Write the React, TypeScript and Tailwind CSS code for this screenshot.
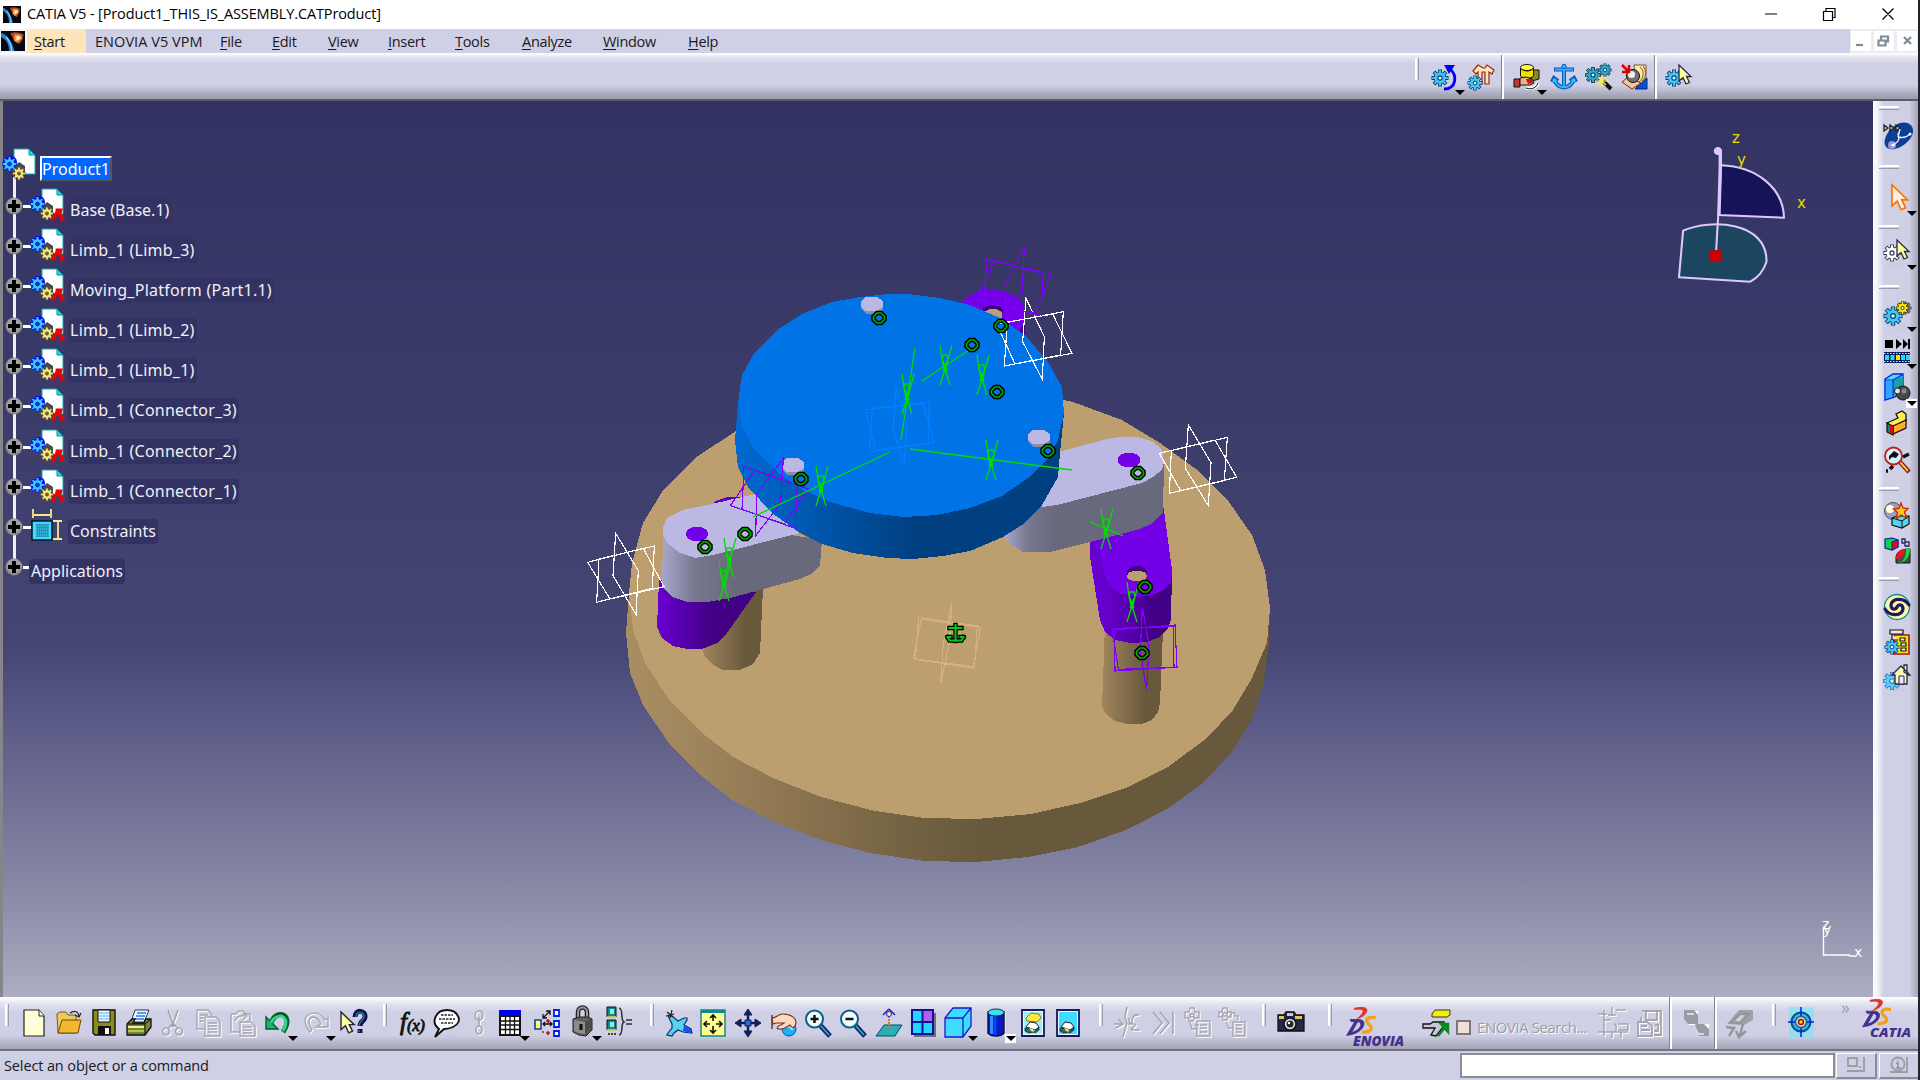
import React from "react";

type Kids = { children?: React.ReactNode };
type Pt = string;

/* ---------- icon primitives ---------- */

function Svg({ children, w = 26, h = 26, vb }: Kids & { w?: number; h?: number; vb?: string }) {
  return (
    <svg width={w} height={h} viewBox={vb ?? `0 0 ${w} ${h}`} className="block shrink-0 overflow-visible" fill="none">
      {children}
    </svg>
  );
}

function Gear({ x, y, r, fill = "#45c8ee", line = "#0b3a78", hole = "#e4f6ff" }: { x: number; y: number; r: number; fill?: string; line?: string; hole?: string }) {
  const teeth = "M0-1V1M-1 0H1M-.71-.71L.71 .71M.71-.71L-.71 .71";
  return (
    <g transform={`translate(${x} ${y}) scale(${r})`}>
      <path d={teeth} stroke={line} strokeWidth=".46" />
      <circle r=".72" fill={line} />
      <path d={teeth} stroke={fill} strokeWidth=".28" transform="scale(.92)" />
      <circle r=".64" fill={fill} />
      <circle r=".25" fill={hole} stroke={line} strokeWidth=".13" />
    </g>
  );
}

function Cursor({ x, y, s = 1, fill = "#ffff99", line = "#26264d" }: { x: number; y: number; s?: number; fill?: string; line?: string }) {
  return <path transform={`translate(${x} ${y}) scale(${s})`} d="M0 0V16L4 12.5L7 19L10.5 17.5L7.5 11.5H12Z" fill={fill} stroke={line} strokeWidth="1.3" />;
}

const Shadow = () => <path d="M6 25h18M9 27h12" stroke="#bcbccc" strokeWidth="1" strokeDasharray="1 1.5" />;

/* ---------- top toolbar icons ---------- */

const IcRotate = () => (
  <Svg><Shadow /><Gear x={8} y={14} r={8.5} /><path d="M12 25C24 25 26 12 18 5" stroke="#0000ff" strokeWidth="2.8" /><path d="M12 1h11l-6 9z" fill="#0000ff" /></Svg>
);
const IcShirt = () => (
  <Svg><Shadow /><path d="M10 1L5 7l3 3 2-2v12h4V8h3v12h4V8l3 2 2-4-7-5-2 3h-2z" fill="#ffe8b0" stroke="#a52020" strokeWidth="1.200" /><Gear x={7} y={19} r={7.5} /></Svg>
);
const IcTurn = () => (
  <Svg><Shadow /><path d="M16 6h9v9l-7 2z" fill="#8a8a20" stroke="#111" /><path d="M6.500 4v8c3 3 10 3 13 0V4c-3 4-10 4-13 0z" fill="#f0e000" stroke="#111" /><ellipse cx="13" cy="3.500" rx="6.500" ry="3" fill="#ffff40" stroke="#111" /><path d="M0 15h6v8H0z" fill="#c03838" stroke="#111" /><path d="M6 14l6-1 6 2 2 4-4 2H6z" fill="#f0b090" stroke="#111" /><path d="M12 15l6 0 1 4-5 1z" fill="#c01818" /><path d="M12 24c6 1 10 0 12-5" stroke="#fff" strokeWidth="3.500" /><path d="M12 24c6 2 10 0 12-5" stroke="#111" /></Svg>
);
const IcAnchor = () => (
  <Svg>
    <Shadow />
    <g stroke="#0a55b8" strokeWidth="4"><path d="M13 5v18M3 5.500h20M3 15c2 6 6 8 10 8.500 4-.5 8-2.500 10-8.500M1 18l2-4 4 3M25 18l-2-4-4 3" /></g>
    <g stroke="#35b8ff" strokeWidth="1.800"><path d="M13 5v18M4 5.500h18M3 15c2 6 6 8 10 8.500 4-.5 8-2.500 10-8.500M2 18l1-3 3 2M24 18l-1-3-3 2" /></g>
    <circle cx="13" cy="2.500" r="2.200" fill="#35b8ff" stroke="#0a55b8" />
  </Svg>
);
const IcGearsWand = () => (
  <Svg><Gear x={7} y={11} r={8} fill="#2ba8cc" line="#0c3050" /><Gear x={19} y={6} r={6.5} fill="#2ba8cc" line="#0c3050" /><path d="M16 16l9 9" stroke="#111" strokeWidth="4" /><path d="M16 11v12M10 17h12M12 13l8 8M20 13l-8 8" stroke="#fff04a" strokeWidth="1.200" /></Svg>
);
const IcCam = () => (
  <Svg><path d="M14 25l12-11v11z" fill="#0050d8" stroke="#002a80" /><path d="M13 1h12v13l-10 9z" fill="#ffe6a0" stroke="#604010" strokeWidth=".8" /><path d="M19 3c5 4 4 11-2 16M22 2c4 5 3 11-1 15" stroke="#7a5a20" /><path d="M1 18l6-5 13 6-9 6z" fill="#f2c4a0" stroke="#7a2a10" /><circle cx="12" cy="12" r="6.500" fill="#707070" stroke="#111" /><circle cx="10.500" cy="10.500" r="3.500" fill="#f0f0f0" /><path d="M1 1l6 6M1 8h7V1" stroke="#e00000" strokeWidth="2.500" /></Svg>
);
const IcGearCursor = ({ grey }: { grey?: boolean }) => (
  <Svg><Shadow />{grey ? <Gear x={8} y={14} r={8.5} fill="#fff" line="#303048" /> : <Gear x={8} y={14} r={8.5} />}<Cursor x={13} y={1} /></Svg>
);

/* ---------- right column icons ---------- */

const IcOrbit = () => (
  <Svg w={30} h={30}>
    <path d="M12 4C20-1 30 2 29 11S14 30 6 28 0 17 5 10c2-3 5-5 7-6z" fill="#0c3f94" />
    <circle cx="8" cy="24" r="4" fill="#9a94d8" />
    <path d="M14 12c2 8 0 9-5 12M14 16c4 1 8 1 12-3M14 16l2-8" stroke="#eef" strokeWidth="1.400" />
    <circle cx="26" cy="13" r="1.500" fill="#fff" /><circle cx="9" cy="24" r="1.600" fill="#fff" />
    <path d="M0 4l4 3-4 3zM6 4l4 3-4 3zM12 4l4 3-4 3z" fill="#d8c8a0" stroke="#222" strokeWidth="1.300" />
  </Svg>
);
const IcSelect = () => <Svg><Cursor x={8} y={0} s={1.3} fill="#fff0e4" line="#ff7300" /></Svg>;
const IcGears2 = () => <Svg><Shadow /><Gear x={21} y={7} r={6.500} fill="#808080" line="#444" /><Gear x={9} y={15} r={9.5} /><Gear x={18.5} y={7} r={6.5} fill="#ffe600" line="#222" hole="#fff" /></Svg>;
const IcFilm = () => (
  <Svg><path d="M1 2h8v8H1zM12 1l6 5-6 5zM19 1l5 5-5 5zM24 1h2v10h-2z" fill="#000" /><path d="M0 14h26v11H0z" fill="#0a1c60" /><path d="M1 17h4v5H1zM6.500 17h4v5h-4zM17 17h4v5h-4zM22 17h4v5h-4z" fill="#20e0f0" /><path d="M12 17h4v5h-4z" fill="#ffe600" /><path d="M0 15.500h26M0 23.500h26" stroke="#dfe6f5" strokeDasharray="1.500 1.500" /></Svg>
);
const IcBoxBall = () => (
  <Svg><path d="M1 5l8-5h10v14l-8 9-10 3z" transform="translate(0 -1)" fill="#50dcff" stroke="#0020e0" strokeWidth="1.400" /><path d="M9 5l10-4v14l-10 6z" fill="#17a0a8" /><path d="M1 5h8v18M9 5l9-5" stroke="#0020e0" strokeWidth="1.200" /><path d="M2 6h6v15l-6 3z" fill="#28a8ff" /><circle cx="19" cy="18" r="7" fill="#4a4a4a" stroke="#111" /><circle cx="13.500" cy="16" r="3" fill="#e4e4e4" stroke="#222" /><circle cx="20" cy="16" r="2.500" fill="#888" /></Svg>
);
const IcMeasure = () => (
  <Svg><Shadow /><path d="M3 13L14 8 12 4l6-3 4 3v7l-13 6z" fill="#ffee50" stroke="#111" strokeWidth="1.300" /><path d="M9 16l13-6v8l-13 6z" fill="#ffa020" stroke="#111" strokeWidth="1.200" /><path d="M11 18l10-5M11 21l10-5" stroke="#ffee50" strokeDasharray="1 1" /><path d="M3 13l6 3v9l-6-3z" fill="#138080" stroke="#111" strokeWidth="1.200" /><path d="M6 15l3 1v8l-3-1z" fill="#d01010" /></Svg>
);
const IcMagnify = () => (
  <Svg><path d="M16 15l9 10" stroke="#7a1010" strokeWidth="4.500" /><path d="M16 15l8 9" stroke="#ffc040" strokeWidth="2" /><circle cx="9.500" cy="9" r="8.500" fill="#d8f0ff" stroke="#c02020" strokeWidth="1.800" /><path d="M5 9l5-5 5 3-3 4-4-1-3 3z" fill="#111" /><path d="M19 10l6-3M2 24l2 0M6 22l3-3" stroke="#111" strokeWidth="3.500" /></Svg>
);
const IcClash = () => (
  <Svg><circle cx="9" cy="9" r="8.500" fill="#9a9cc0" stroke="#555" /><circle cx="6" cy="7" r="4" fill="#ffffe0" /><path d="M8 16l5-2h12v8l-7 4-10-3z" fill="#50d8f0" stroke="#111" strokeWidth="1.200" /><path d="M8 16l10 3v7M18 19l7-5" stroke="#111" /><path d="M17 1l2 5 5 .5-3.500 3.500 2 6-5.500-3-4.500 3.500 1-6-4-3.500 5.500-.5z" fill="#ffc820" stroke="#d02010" strokeWidth="1.300" /></Svg>
);
const IcCubes = () => (
  <Svg><path d="M1 2l7-1 6 2v7l-6 3-7-2z" fill="#00d840" stroke="#1a1aa0" strokeWidth="1.200" /><path d="M8 5l6-2v7l-6 3z" fill="#f00020" stroke="#1a1aa0" /><path d="M18 2h3v4h-3zM21 5h4v4h-4z" stroke="#26265a" strokeWidth="1.300" /><path d="M12 26v-6c1-6 6-8 14-8v14z" fill="#4a4a4a" stroke="#111" /><path d="M12 20c2-6 6-8 9-8-1 6-4 9-9 10z" fill="#ff1020" /><path d="M12 26c8 0 10-6 10-14l4 0c0 7-4 13-11 14z" fill="#10e030" /></Svg>
);
const IcSwirl = () => (
  <Svg>
    <circle cx="13" cy="13" r="12.500" fill="#fff6a0" stroke="#0b8a98" strokeWidth="1.300" />
    <g stroke="#1a1a60" strokeWidth="3.200" strokeLinecap="round">
      <path d="M25 11C20 3 8 4 7 11c0 4 4 6 6 2" />
      <path d="M1 15c5 8 17 7 18 0 0-4-4-6-6-2" />
    </g>
  </Svg>
);
const IcTreeGear = () => (
  <Svg><path d="M10 6h15v19H10z" fill="#ffe600" stroke="#a01818" strokeWidth="1.600" /><path d="M6 1h13v4H6zM8 5v6h6M16 9h5v3h-5zM17 14h5v3h-5zM17 19h5v3h-5z" fill="#e8e8f0" stroke="#111" strokeWidth="1.200" /><Gear x={8} y={18} r={7.5} fill="#45c4f4" /></Svg>
);
const IcHome = () => (
  <Svg><Shadow /><Gear x={8} y={17} r={9} fill="#45d8f8" line="#5a6ab0" /><path d="M20 8V1h3v9zM8 11L17 2l9 9h-3v9H11v-9z" fill="#fff6b0" stroke="#26264d" strokeWidth="1.300" /><path d="M15 12h5v8h-5z" fill="#e8e8ff" stroke="#26264d" /></Svg>
);

/* ---------- bottom toolbar icons ---------- */

const IcNew = () => <Svg><Shadow /><path d="M3 0h15l5 6v20H3z" fill="#ffffcf" stroke="#222" strokeWidth="1.200" /><path d="M18 0v6h5" fill="#fff" stroke="#222" /><path d="M6 13l5-5 3 5 6-3M6 20l7-3" stroke="#fff" strokeWidth="2" /></Svg>;
const IcOpen = () => <Svg><Shadow /><path d="M1 4l3-2h6l2 3h8v18H2z" fill="#e8cc60" stroke="#7a5a00" /><path d="M2 23L6 10h19l-3 13z" fill="#f2b830" stroke="#6a4a00" /><path d="M14 3c4-3 8-2 9 3M25 3l-2 4-4-2" stroke="#222" strokeWidth="1.200" /></Svg>;
const IcSave = () => <Svg><Shadow /><path d="M2 0h22v25H4l-2-2z" fill="#8c8c18" stroke="#111" strokeWidth="1.400" /><path d="M7 0h12v12H7z" fill="#e8f4ff" stroke="#111" /><path d="M8 3h10M8 6h10M8 9h10" stroke="#60b0f0" /><path d="M7 16h13v9H7z" fill="#111" /><path d="M14 18h4v6h-4z" fill="#fff" /></Svg>;
const IcPrint = () => <Svg><Shadow /><path d="M9 0h14l-5 12H5z" fill="#eef6ff" stroke="#203060" /><path d="M11 3h9M10 6h9M8 9h10" stroke="#2080e0" strokeWidth="1.500" /><path d="M1 14l5-5h3l-2 4h11l2-4h5v8l-6 8H1z" fill="#7c8430" stroke="#111" strokeWidth="1.300" /><path d="M1 14h18l6-5M19 14v11" stroke="#111" /><path d="M2 16h16v2H2z" fill="#f0f0a0" /><path d="M2 20h16v2H2z" fill="#b8c060" /><path d="M15 20h3" stroke="#00ff00" /></Svg>;

const Emboss = ({ d, w = 2 }: { d: string; w?: number }) => (
  <Svg><path d={d} stroke="#fff" strokeWidth={w} transform="translate(1 1)" /><path d={d} stroke="#a5a5ac" strokeWidth={w} /></Svg>
);
const IcCut = () => <Emboss w={1.6} d="M8 0l6 17M18 0l-6 17M6 18a3.500 3.500 0 1 0 .1 0M19 18a3.500 3.500 0 1 0 .1 0M12 14l-4 5M14 14l4 5" />;
const IcCopy = () => <Emboss w={1.3} d="M1 0h11l4 4v3M1 0v19h7M4 5h8M4 8h4M4 11h4M9 7h11l4 4v15H9zM12 13h9M12 16h9M12 19h9M12 22h9" />;
const IcPaste = () => <Emboss w={1.4} d="M1 4h5l3-3h4l3 3h4v7M1 4v18h9M5 11c2-5 5-6 10-5M13 3l4 3-4 4M10 12h11l4 4v10H10zM13 17h9M13 20h9M13 23h9" />;
const IcUndo = () => <Svg><Shadow /><path d="M6 13C10 2 21 2 22 11c0 5-2 8-4 11" stroke="#045a2e" strokeWidth="5" /><path d="M1 7v12h12z" fill="#18b868" stroke="#045a2e" strokeWidth="1.400" /><path d="M6 13C10 4 20 4 21 12c0 4-1 6-3 9" stroke="#30d888" strokeWidth="3" /></Svg>;
const IcRedo = () => <Emboss w={1.4} d="M22 10C16 0 5 2 2 9c0 5 1 8 5 13l2-3C6 16 4 8 10 7c4 0 6 3 8 7l-5 3h12V8z" />;
const IcHelp = () => <Svg><Shadow /><path d="M14 7c0-8 11-7 10 0 0 4-5 4-5 9M19 19v4" stroke="#10104a" strokeWidth="5" /><path d="M15 7c0-6 8-6 8 0 0 3-5 4-5 9M18 20v2" stroke="#1e7a90" strokeWidth="1.500" /><Cursor x={0} y={2} s={1.1} /></Svg>;
const IcFx = () => (
  <Svg><Shadow /><text x="1" y="20" fontSize="25" fontStyle="italic" fill="#111" stroke="#111" strokeWidth=".9" fontFamily="Liberation Serif, serif">f</text><text x="8" y="21" fontSize="17" fontStyle="italic" fill="#111" stroke="#111" strokeWidth=".8" textLength="18" fontFamily="Liberation Serif, serif">(x)</text></Svg>
);
const IcBubble = () => <Svg><Shadow /><path d="M1 27l4-8C-4 12 2 0 13 0s17 12 6 17c-4 2-7 2-9 2z" fill="#fff" stroke="#111" strokeWidth="1.900" /><path d="M7 5h12M5 9h16M7 13h12" stroke="#222" strokeWidth="1.600" strokeDasharray="2.500 1" /></Svg>;
const IcChain = () => <Emboss w={1.6} d="M13 1c5 0 5 9 0 9s-5-9 0-9M13 7v10M13 16c4 0 4 8 0 8s-4-8 0-8" />;
const IcTable = () => <Svg><path d="M2 0h22v26H2z" fill="#111" /><path d="M2 0h22v6H2z" fill="#0000e8" /><path d="M4 7h18v17H4z" fill="#fff" /><path d="M8.500 7v17M13 7v17M17.500 7v17M4 11h18M4 15h18M4 19.500h18" stroke="#111" strokeWidth="1.300" /></Svg>;
const IcRelate = () => <Svg><path d="M1 10h6v9H1z" fill="#ffff60" stroke="#1040a0" strokeWidth="1.600" /><path d="M9 8l7-7M12 1h4v4M9 4v4h4M9 14h9M11 12l-2 2 2 2M16 12l2 2-2 2" stroke="#111" strokeWidth="1.300" /><path d="M14 9v4M12 11h4M14 21v4M12 23h4M8 22h2" stroke="#c01010" strokeWidth="1.500" /><path d="M20 0h5v6h-5zM20 11h5v6h-5zM20 21h5v5h-5z" fill="#fff" stroke="#0020e0" strokeWidth="1.800" /></Svg>;
const IcLock = () => <Svg><Shadow /><path d="M9 9V2c0-6 9-6 9 0v7" stroke="#222" strokeWidth="4.500" /><path d="M9 9V2c0-6 9-6 9 0v7" stroke="#999" strokeWidth="2" /><path d="M4 9l6-2h9l4 2v11l-6 6-7-1-6-3z" fill="#606060" stroke="#222" /><path d="M5 10l11 2v12l-6-1-5-2z" fill="#8c8c8c" /><path d="M16 12l6-3v10l-6 6z" fill="#4c4c4c" /><path d="M12 14v6" stroke="#111" strokeWidth="3" /></Svg>;
const IcEquiv = () => <Svg><path d="M1-3h9v10H1zM1 10h9v10H1z" fill="#138a8a" stroke="#111" /><path d="M4-1h4v5H4zM4 12h4v5H4z" fill="#8ae8f0" /><path d="M1 7h9M1 20h9" stroke="#ffe640" strokeWidth="1.500" /><path d="M2 24h8" stroke="#111" strokeWidth="1.500" strokeDasharray="2 1" /><path d="M13-2c5 1 1 12 5 14-4 2 0 12-5 13M20 10h6M20 14h6" stroke="#333" strokeWidth="1.500" /></Svg>;

const IcPlane = () => <Svg><Shadow /><path d="M2 6l4 0 6 5 6-3 3 0 0 2-3 5 7 4 1 4-9-1-5-2-4 3-2 3-5-1 1-2 4-5 0-4z" fill="#58d4ea" stroke="#12306a" strokeWidth="1.200" /><path d="M18 16l8 4-2 3-7-2z" fill="#1848ff" /><path d="M1 2l6 5M6 0L4 8M0 6l8-2" stroke="#222" strokeWidth="1.200" /></Svg>;
const IcFit = () => <Svg><path d="M1 0h24v26H1z" fill="#ffff90" stroke="#138a8a" strokeWidth="1.500" /><path d="M1 0h24v3H1z" fill="#138a8a" /><path d="M13 11V5M13 16v7M10 14H4M16 14h6M10 8l3-3 3 3M10 20l3 3 3-3M7 11l-3 3 3 3M19 11l3 3-3 3" stroke="#111" strokeWidth="1.600" /></Svg>;
const IcPan = () => <Svg><Shadow /><path d="M13 2v22M2 13h22" stroke="#10205a" strokeWidth="2.500" /><path d="M13-1l4 6H9zM13 27l4-6H9zM0 13l6-4v8zM26 13l-6-4v8z" fill="#10205a" stroke="#10205a" /><path d="M10 10h6v6h-6z" fill="#2a6ad0" stroke="#10205a" /></Svg>;
const IcHand = () => <Svg><Shadow /><circle cx="18" cy="19" r="7" fill="#20b0f0" stroke="#0a50c0" /><path d="M15 17c3-2 6 0 6 3" stroke="#bff0ff" strokeWidth="2" /><path d="M1 8c4 0 6-4 11-4 8 0 13 4 13 9-1 5-4 6-6 2-4 2-6 5-11 4-3 0-2-3 2-4l3-2H5l-3 1z" fill="#ffd8c0" stroke="#7a3020" strokeWidth="1.200" /><path d="M1 5v14" stroke="#7a3020" strokeWidth="1.500" /></Svg>;
const IcZoom = ({ plus }: { plus?: boolean }) => <Svg><Shadow /><path d="M15 15l10 11" stroke="#10206a" strokeWidth="5" /><path d="M15 15l9 10" stroke="#30a8d8" strokeWidth="1.800" /><circle cx="9.500" cy="9" r="8.500" fill="#f2fbff" stroke="#0b6088" strokeWidth="2" /><path d={plus ? "M5.500 9h8M9.500 5v8" : "M5.500 9h8"} stroke="#111" strokeWidth="2.500" /></Svg>;
const IcNormal = () => <Svg><Shadow /><path d="M0 26L8 15h18l-7 11z" fill="#28b0b8" stroke="#0a4a60" /><path d="M13 20V3" stroke="#e07000" strokeWidth="1.800" strokeDasharray="2 1" /><path d="M13-1l-6 6M13-1l6 6" stroke="#2020c0" strokeWidth="1.500" /><circle cx="13" cy="4" r="2.500" fill="#ffe8a0" stroke="#2020c0" /></Svg>;
const IcMulti = () => <Svg><path d="M4 3h22v24H4z" fill="#707078" /><path d="M2 0h21v24H2z" fill="#20d8ff" stroke="#10109a" strokeWidth="2" /><path d="M13 1h9v10h-9z" fill="#b060f0" /><path d="M12.500 0v24M2 12h21" stroke="#10109a" strokeWidth="2" /></Svg>;
const IcCube = () => <Svg><path d="M0 8L8-2h18v18l-8 11H0zM0 8h18v19M18 8l8-10" fill="#40dcff" stroke="#1818d0" strokeWidth="1.300" /></Svg>;
const IcCyl = () => <Svg><path d="M5 2h18v24H5z" fill="#f4f0a0" /><path d="M5 2v21c3 4 13 4 16 0V2z" fill="#0a1ac0" stroke="#0a0a50" strokeWidth="1.400" /><path d="M8.500 6v18" stroke="#2a90ff" strokeWidth="3" /><path d="M12 6v19" stroke="#1040ff" strokeWidth="3" /><ellipse cx="13" cy="2.500" rx="8" ry="3.500" fill="#40dcf0" stroke="#0a3060" /></Svg>;
const IcHide = ({ swap }: { swap?: boolean }) => (
  <Svg>
    <Shadow />
    <path d="M2 0h22v26H2z" fill={swap ? "#9ceefa" : "#40dcff"} stroke="#18185a" strokeWidth="1.800" />
    <path d="M3.500 1.500h19v23h-19z" stroke="#e8fcff" />
    {swap && <path d="M6 8l5-5 8 1 2 4-4 4-10-1z" fill="#ffe640" stroke="#8a7a20" />}
    <path d="M6 17l4-5 6 1 3 4-4 3z" fill="#fff" stroke="#222" /><path d="M5 18l5 0 4 4-5 1-4-2zM14 22l5-5 0 3-4 3z" fill="#1a6a90" stroke="#222" strokeWidth=".8" /><path d="M9 18l4 1 1 3-3-1z" fill="#ffe640" />
  </Svg>
);

const IcG1 = () => <Emboss w={1.6} d="M0 14h9M2 18l7-4-5-5M13-3l-2 10 2 6-4 14M14 14h6M17 20h9M15 8c0 4 0 6 5 6M25 5c-6-1-7 3-7 8M17 20l5-6" />;
const IcG2 = () => <Emboss w={1.6} d="M2 2l9 11-9 11M9 2l9 11-9 11M22 2v22" />;
const IcG3 = () => <Emboss w={1.4} d="M1 2h4l1-4h4l1 4h4v6h-4l-2 3H5L4 8H1zM6 4h4v3H6zM6 12l2 7h5M13 11h13v15H13zM16 15h7M16 18h7M16 22h7M11 15h4" />;
const IcG4 = () => <Emboss w={1.4} d="M0 2h3l1-4h4l1 4h3v5H9L8 10H4L3 7H0zM4 3h4v3H4zM12 3h4v3h3v4M7 12l3 6h4M14 12h12v14H14zM17 15h6M17 19h6M17 22h6" />;
const IcCamera = () => <Svg><Shadow /><path d="M0 5h6l2-3h8l2 3h8v16H0z" fill="#26264a" stroke="#111" strokeWidth="1.300" /><path d="M1 6h5v3H1zM17 6h7v3h-7z" fill="#d8c860" /><path d="M9 3h6v3H9z" fill="#c8c8d8" /><circle cx="12" cy="14" r="6" fill="#ddd" stroke="#111" strokeWidth="1.500" /><circle cx="12" cy="14" r="3.500" fill="#223" /><circle cx="11" cy="13" r="1.200" fill="#fff" /></Svg>;
const IcSearch = () => <Svg><Shadow /><path d="M9 4l3-4h15v5l-3 2H9z" fill="#f0f000" stroke="#333" /><path d="M0 14h7l3-2h11v4l-8 10-5-1 4-7H0z" fill="#c8c8d4" stroke="#111" strokeWidth="1.300" /><path d="M15 26l9-11M18 14h7v8z" fill="#0a8a20" stroke="#0a8a20" strokeWidth="2.500" /></Svg>;
const IcG5 = () => <Emboss w={1.5} d="M-2 4h9M4 0v26M-2 22h30M4 10h7M12-3v9M8 5h8M16 0h10M14 14c3 0 3 8 0 8M18 14h10v6H18M21 22v6M12 22v6" />;
const IcG6 = () => <Emboss w={1.8} d="M5 1h19v24h-7M9 1v9h11V1M1 12h9l5 4v10H1zM4 7v5M4 16h6M4 20h9M18 15h3v6h-4" />;
const IcG7 = () => <Svg><path d="M1 0h13v14H5L1 9zM13 13h12v12H15z" fill="#fff" transform="translate(1 1)" /><path d="M1 0h10l4 5v9H5L1 9zM12 14h9l5 5v7H16z" fill="#9a9aa2" /><path d="M4 4h7M12 19l4 5 5 0" stroke="#d8d8e4" strokeWidth="2" /></Svg>;
const IcG8 = () => <Svg><path d="M1 14L13 0h14v10l-9 5z" fill="#a0a0a8" /><path d="M6 12L14 4h8l-8 9zM0 17l8 1-5 8M17 14l-3 11M10 21l3 6 7-6" fill="#d0d0e0" stroke="#94949c" strokeWidth="2.400" /></Svg>;
const IcTarget = () => <Svg><path d="M2-3h25v30H2z" fill="#70e6fa" opacity=".6" /><circle cx="14" cy="12" r="9.500" fill="#30b8e0" stroke="#0a4a90" strokeWidth="2" /><circle cx="14" cy="12" r="5.500" fill="#ffe890" stroke="#1a60a0" strokeWidth="1.500" /><path d="M14-3v9M14 18v9M1 12h7M20 12h7" stroke="#0020e0" strokeWidth="1.500" /><circle cx="14" cy="12" r="2.500" fill="#ffd850" stroke="#901010" strokeWidth="1.500" /></Svg>;

function DSLogo({ name, w }: { name: string; w: number }) {
  const big = w === 64;
  return (
    <Svg w={w} h={40} vb={`0 0 ${w} 40`}>
      <g transform={big ? "scale(1.02 1.02)" : ""}>
        <path d="M5 13.200H13C23.500 13 19 27.500 1.500 28.800L3 26.500 9.500 15.500L12.500 15.300L6.500 26C16 23.500 18.500 15.500 11.500 15.200H6Z" fill="#432f8c" stroke="#432f8c" strokeWidth=".8" />
        <path d="M9 2.200C15 .8 22 .8 21.500 4.500C21 8.500 16 11.500 11.500 12.500C15 10 18.500 6.500 17.500 4.500C16.500 3 12.500 3 9 3.500Z" fill="#e0332c" stroke="#e0332c" strokeWidth=".7" />
        <path d="M30 11.500C20.500 10 19 14.200 23.500 18.200C28 22.200 25.500 25.500 16.500 25.800" stroke="#f3a01e" strokeWidth="3.200" />
      </g>
      <text x={big ? 8 : 9} y={big ? 39.500 : 38.500} fontSize={big ? 14 : 12} fontStyle="italic" fontWeight="800" fill="#432f8c" textLength={big ? 51 : 41} lengthAdjust="spacingAndGlyphs" fontFamily="Open Sans, sans-serif">{name}</text>
    </Svg>
  );
}

/* ---------- toolbar pieces ---------- */

const Arrow = ({ lit }: { lit?: boolean }) => (
  <span className={`absolute -right-[7px] -bottom-[7px] flex h-[9px] w-[11px] items-center justify-center ${lit ? "bg-white" : ""}`}>
    <svg width="10" height="5" viewBox="0 0 10 5"><path d="M0 0h10L5 5z" fill="#000" /></svg>
  </span>
);

function Slot({ gap, arrow, lit, children }: Kids & { gap: string; arrow?: boolean; lit?: boolean }) {
  return (
    <div className={`relative h-[26px] w-[26px] shrink-0 ${gap}`}>
      {children}
      {arrow && <Arrow lit={lit} />}
    </div>
  );
}
const Grip = ({ gap }: { gap: string }) => <div className={`mt-[-16px] h-[22px] w-1 shrink-0 border-r border-l-2 border-r-[#9c9cac] border-l-white ${gap}`} />;
const Sep = ({ gap }: { gap: string }) => <div className={`h-full w-[3px] shrink-0 border-l border-r-2 border-l-[#84848e] border-r-white ${gap}`} />;

/* ---------- app logo ---------- */

const AppIcon = ({ w, h }: { w: number; h: number }) => (
  <svg width={w} height={h} viewBox="0 0 18 17" preserveAspectRatio="none" className="block shrink-0">
    <path d="M0 0h18v17H0z" fill="#050814" />
    <path d="M7 2c4-2 8 0 10 1l-1 4-2 4-4-2z" fill="#b4481c" /><path d="M10 3l4 0 2 3-4 4-2-2z" fill="#f09840" /><path d="M12 4l3 1-2 3-2-1z" fill="#fff0c0" />
    <path d="M0 2c3 0 8 5 10 15H6C6 11 4 7 0 5z" fill="#2b7fd4" /><path d="M4 5c2 3 4 7 4 12" stroke="#8fd4ff" fill="none" />
  </svg>
);

/* ---------- 3D scene ---------- */

const Quads = ({ q, c }: { q: Pt[]; c: string }) => (
  <g stroke={c} strokeWidth="3.500" fill="none">{q.map((p) => <polygon key={p} points={p} />)}</g>
);

const rings = [[879, 318], [1001, 326], [972, 345], [997, 392], [1048, 451], [801, 479], [745, 534], [705, 547], [1138, 473], [1145, 587], [1142, 653]];
const knots = [[945, 365], [982, 375], [907, 394], [991, 460], [821, 486], [729, 558], [724, 581], [1106, 529], [1132, 602]];
const pins = [[872, 304], [1039, 437], [793, 465]];

function Scene() {
  return (
    <svg className="absolute inset-0" width="1870" height="896" viewBox="3 101 1870 896" fill="none">
      <defs>
        <linearGradient id="baseSide" gradientUnits="userSpaceOnUse" x1="626" x2="1270" y1="0" y2="0">
          <stop offset="0" stopColor="#a98e62" /><stop offset=".1" stopColor="#a0865d" /><stop offset=".3" stopColor="#87704d" /><stop offset=".42" stopColor="#756444" /><stop offset=".55" stopColor="#68593d" />
        </linearGradient>
        <linearGradient id="blueSide" gradientUnits="userSpaceOnUse" x1="735" x2="1064" y1="0" y2="0">
          <stop offset="0" stopColor="#006ad4" /><stop offset=".25" stopColor="#0056ac" /><stop offset=".55" stopColor="#003f80" />
        </linearGradient>
        <linearGradient id="greyL" gradientUnits="userSpaceOnUse" x1="662" x2="735" y1="0" y2="0">
          <stop offset="0" stopColor="#a9a8cd" /><stop offset=".45" stopColor="#77778f" /><stop offset="1" stopColor="#69697d" />
        </linearGradient>
        <linearGradient id="greyR" gradientUnits="userSpaceOnUse" x1="1003" x2="1055" y1="0" y2="0">
          <stop offset="0" stopColor="#a9a8cd" /><stop offset=".5" stopColor="#77778f" /><stop offset="1" stopColor="#69697d" />
        </linearGradient>
        <linearGradient id="purL" gradientUnits="userSpaceOnUse" x1="657" x2="710" y1="0" y2="0">
          <stop offset="0" stopColor="#6a00d4" /><stop offset="1" stopColor="#420084" />
        </linearGradient>
        <linearGradient id="purR" gradientUnits="userSpaceOnUse" x1="1090" x2="1155" y1="0" y2="0">
          <stop offset="0" stopColor="#6a00d4" /><stop offset=".3" stopColor="#6400c8" /><stop offset="1" stopColor="#420084" />
        </linearGradient>
        <linearGradient id="postL" gradientUnits="userSpaceOnUse" x1="702" x2="745" y1="0" y2="0">
          <stop offset="0" stopColor="#a0865d" /><stop offset="1" stopColor="#68593d" />
        </linearGradient>
        <linearGradient id="postR" gradientUnits="userSpaceOnUse" x1="1102" x2="1145" y1="0" y2="0">
          <stop offset="0" stopColor="#a0865d" /><stop offset="1" stopColor="#68593d" />
        </linearGradient>
      </defs>

      <g shapeRendering="crispEdges">
        {/* base plate */}
        <polygon fill="url(#baseSide)" points="629,593 626,633 630,673 643,705 670,745 698,773 732,800 775,822 821,840 870,853 924,861 976,862 1028,857 1078,847 1126,830 1167,809 1203,783 1231,753 1252,720 1263,687 1269,643 1270,608" />
        <polygon fill="#bd9f6f" points="800,395 736,431 695,458 662,492 643,523 632,563 629,593 633,630 645,663 670,701 701,732 733,757 773,778 821,797 875,811 924,818 977,819 1031,814 1080,803 1126,788 1168,767 1207,738 1233,710 1252,678 1267,643 1270,608 1265,570 1252,535 1229,502 1200,472 1160,443 1122,420 1073,402 1063,400 1000,380 900,375" />

        {/* posts */}
        <polygon fill="url(#postL)" points="702,640 702,648 705,657 713,665 723,670 740,670 753,664 760,653 763,588 735,590" />
        <polygon fill="url(#postR)" points="1105,625 1102,707 1107,715 1115,721 1127,724 1142,724 1152,720 1158,712 1160,703 1163,630" />

        {/* left arm */}
        <polygon fill="url(#purL)" points="659,580 657,627 662,638 673,646 687,649 702,649 717,643 727,633 756,592" />
        <polygon fill="#6000c4" points="713,503 718,500 728,497 740,497 740,505" />
        <polygon fill="url(#greyL)" points="663,535 662,587 672,597 687,602 707,602 730,598 800,579 813,573 820,565 822,540 760,530" />
        <polygon fill="#bbb9e3" points="663,527 667,518 683,510 712,504 755,494 830,533 800,533 713,555 695,558 680,553 667,543 663,535" />
        <ellipse cx="697" cy="534" rx="11" ry="7.500" fill="#7300e6" />

        {/* right arm */}
        <polygon fill="url(#purR)" points="1090,535 1090,557 1100,620 1105,632 1115,640 1130,643 1147,642 1160,637 1168,628 1171,620 1172,570 1120,530" />
        <polygon fill="#7300e6" points="1161,495 1164,510 1167,533 1172,570 1171,582 1163,590 1153,595 1137,597 1120,593 1110,586 1104,573 1097,536" />
        <ellipse cx="1137" cy="573" rx="10.500" ry="7" fill="#420084" />
        <ellipse cx="1137" cy="576" rx="10" ry="5.500" fill="#bd9f6f" />
        <polygon fill="url(#greyR)" points="1164,462 1163,512 1153,523 1140,529 1090,542 1050,552 1023,552 1010,544 1003,537 1040,495" />
        <polygon fill="#bbb9e3" points="1050,454 1062,451 1107,439 1120,437 1137,437 1152,441 1162,449 1164,462 1162,470 1153,477 1142,483 1057,505 1035,508" />
        <ellipse cx="1129" cy="460" rx="11.500" ry="7.500" fill="#7300e6" />

        {/* rear link */}
        <polygon fill="#7300e6" points="961,303 967,297 980,290 993,289 1010,293 1022,302 1025,315 1025,337 990,330" />
        <polygon fill="#420084" points="1018,332 1025,322 1025,337" />
        <ellipse cx="993" cy="311" rx="10.500" ry="6" fill="#420084" />
        <ellipse cx="993" cy="315" rx="9.500" ry="6" fill="#bd9f6f" />

        {/* moving platform */}
        <polygon fill="url(#blueSide)" points="738,403 735,440 738,467 748,487 772,513 800,533 822,544 853,553 887,558 913,559 943,556 970,551 1003,537 1025,523 1042,505 1058,477 1060,453 1064,413" />
        <polygon fill="#0073e6" points="860,297 887,294 908,294 940,298 970,305 1000,318 1025,335 1048,362 1062,387 1064,413 1058,440 1047,460 1028,478 1002,496 970,508 937,515 903,517 870,513 833,503 803,490 777,472 753,447 742,427 738,403 742,375 755,352 777,330 802,314 832,302" />
        {pins.map(([x, y]) => (
          <g key={x}>
            <path d={`M${x - 11} ${y}v5l6 5h9l7-4v-6z`} fill="#8d8cac" />
            <path d={`M${x - 6} ${y - 7}h11l6 4v6l-6 4h-11l-5-4v-6z`} fill="#bbb9e3" />
          </g>
        ))}
      </g>

      {/* reference planes */}
      <g transform="translate(580 240) scale(.33333)" shapeRendering="crispEdges">
        <Quads c="#ffffff" q={["1338,175 1393,290 1387,418 1328,305", "1282,247 1450,215 1442,345 1273,378", "1250,252 1418,222 1476,340 1305,372"]} />
        <Quads c="#ffffff" q={["107,880 175,992 168,1123 99,1007", "57,957 223,918 217,1045 50,1087", "23,967 190,925 252,1040 90,1077"]} />
        <Quads c="#0080ff" q={["947,440 980,555 973,682 940,570", "877,505 1048,486 1045,612 868,635", "856,510 1028,490 1064,608 888,630"]} />
        <Quads c="#8000ff" q={["610,655 602,790 527,887 530,762", "492,680 652,735 645,865 486,808", "525,690 685,747 613,852 451,797"]} />
        <Quads c="#8000ff" q={["1333,20 1327,155 1279,245 1277,135", "1220,57 1390,98 1383,225 1213,185", "1243,63 1413,105 1360,222 1190,180"]} />
        <Quads c="#d3b27c" q={["1116,1088 1108,1210 1082,1330 1090,1210", "1016,1132 1192,1158 1183,1285 1006,1258", "1024,1138 1202,1162 1180,1280 1000,1256"]} />
      </g>
      <g transform="translate(960 240) scale(.33333)" shapeRendering="crispEdges">
        <Quads c="#ffffff" q={["685,555 753,668 745,797 676,685", "634,632 802,592 793,722 628,760", "598,640 765,600 830,712 662,752"]} />
        <Quads c="#8000ff" q={["547,1100 567,1215 560,1350 541,1235", "463,1165 640,1160 642,1282 465,1293", "457,1170 645,1155 651,1282 475,1288"]} />
      </g>

      {/* constraints */}
      <g stroke="#00dc00" strokeWidth="1.300">
        <path d="M915 348L901 440M972 348L922 381M910 449L1072 470M890 452L753 517M1090 522L1123 536" />
        {knots.map(([x, y]) => (
          <path key={`${x}-${y}`} transform={`translate(${x} ${y})`} d="M-5-20L-3-6 5 20M7-20L3-5-5 20M-3-5l1-5h4l1 5-2 8h-2zM-2-4l4 10M2-4l-4 10" />
        ))}
      </g>
      {rings.map(([x, y]) => (
        <g key={`${x}-${y}`} transform={`translate(${x} ${y})`}>
          <path d="M-2-5h4l3.500 3.500v3L2 5h-4l-3.500-3.500v-3z" stroke="#000" strokeWidth="4.500" />
          <path d="M-2-5h4l3.500 3.500v3L2 5h-4l-3.500-3.500v-3z" stroke="#00b400" strokeWidth="1.600" />
        </g>
      ))}
      <g transform="translate(955.500 633)" strokeLinecap="square">
        <path d="M0-8V8M-6-5H6M-8 4l2 3.500H6L8 4M-8 4h3M8 4H5" stroke="#000" strokeWidth="4.400" />
        <path d="M0-8V8M-6-5H6M-8 4l2 3.500H6L8 4M-8 4h3M8 4H5" stroke="#00c814" strokeWidth="2" />
      </g>

      {/* compass */}
      <g transform="translate(1380 0) scale(.34444 .33333)" stroke="#dcc8ff" strokeWidth="6" strokeLinejoin="round">
        <path d="M990 496C1090 500 1170 560 1173 653L983 645Z" fill="#151456" />
        <path d="M880 692C960 655 1125 665 1122 785Q1110 825 1075 845L868 832Z" fill="#1c465f" />
        <path d="M982 645L976 750" />
        <path d="M988 453L988 500 984 645" strokeWidth="10" />
        <circle cx="981" cy="453" r="9" fill="#dcc8ff" />
        <path d="M957 751h34v34h-34z" fill="#d00000" stroke="none" />
      </g>
      <g fill="#e6dc00" fontFamily="DejaVu Sans, sans-serif" fontSize="15">
        <text x="1732" y="143">z</text><text x="1737" y="165">y</text><text x="1797" y="208">x</text>
      </g>

      {/* axis triad */}
      <path d="M1823.500 928V955H1850M1849 956h6" stroke="#fff" strokeWidth="1.400" />
      <g fill="#fff" fontFamily="DejaVu Sans, sans-serif" fontSize="14">
        <text x="1822" y="929">z</text><text x="1823" y="934">y</text><text x="1854" y="957">x</text>
      </g>
    </svg>
  );
}

/* ---------- specification tree ---------- */

const Plus = () => (
  <svg width="18" height="18" viewBox="0 0 18 18" className="relative block shrink-0">
    <circle cx="9" cy="9" r="8.500" fill="#8c8c8c" /><circle cx="9" cy="8" r="7" fill="#a2a2a2" /><path d="M9 3v12M3 9h12" stroke="#000" strokeWidth="4" />
  </svg>
);

const DocIcon = ({ root }: { root?: boolean }) => (
  <svg width="33" height="33" viewBox="0 0 33 33" className="relative block shrink-0 overflow-visible" fill="none">
    <path d="M11 1h15l6 6v19H11z" fill="#fff" stroke="#12a8b4" /><path d="M26 1v6h6z" fill="#20e0f0" stroke="#0a8a98" />
    <path d="M8 22l8-8 6 4v8l-8 5z" fill="#4a4a4a" />
    <circle cx="8" cy="14" r="6" fill="#0014e0" />
    <Gear x={6.5} y={16} r={7.5} fill="#38c8ff" line="#0014e0" hole="#0040c0" />
    <Gear x={16} y={25.5} r={6.5} fill="#f4e88c" line="#6a5c20" hole="#6a5c20" />
    {!root && <path d="M22 31l3-4 1-5h4l-1 4 4 5M20 31h4M29 31h4M25 27l-3-1M27 22v5" stroke="#f00000" strokeWidth="2.800" />}
  </svg>
);

const ConstraintIcon = () => (
  <svg width="33" height="33" viewBox="0 0 33 33" className="relative block shrink-0" fill="none">
    <path d="M1 12h20v19H1z" fill="#40dcff" stroke="#08142e" strokeWidth="1.500" /><path d="M5 15h13v13H5z" fill="#2a94b8" /><path d="M5 17h13M5 20h13M5 23h13M5 26h13" stroke="#40dcff" strokeDasharray="1 1" />
    <path d="M2 0v9M20 0v9M3 6h16M22 12h9M22 30h9M27 13v16" stroke="#f4e88c" strokeWidth="1.800" />
  </svg>
);

const parts = ["Base (Base.1)", "Limb_1 (Limb_3)", "Moving_Platform (Part1.1)", "Limb_1 (Limb_2)", "Limb_1 (Limb_1)", "Limb_1 (Connector_3)", "Limb_1 (Connector_2)", "Limb_1 (Connector_1)"];

const Label = ({ children, tight }: Kids & { tight?: boolean }) => (
  <span className={`mt-[6px] h-[25px] rounded bg-[#333363] px-[2px] text-[16px] leading-[25px] whitespace-pre text-[#f0f0f8] ${tight ? "tracking-[0px]" : "tracking-[0.25px]"}`}>{children}</span>
);

function Tree() {
  return (
    <div className="relative w-[330px] pt-[48px] font-['Noto_Sans',sans-serif]">
      <div className="absolute top-[76px] left-[9.5px] h-[390px] w-[3px] bg-[#f0f0f0]" />
      <div className="relative flex h-[39px] items-start">
        <div className="mt-[-1px]"><DocIcon root /></div>
        <span className="mt-[7px] ml-[4px] h-[25px] w-[72px] border-t-2 border-r-2 border-b-2 border-l-2 border-t-white border-r-[#555] border-b-[#555] border-l-white bg-[#0066ff] text-[16px] leading-[23px] text-white">Product1</span>
      </div>
      {[...parts, "Constraints"].map((p, i) => (
        <div key={p} className="relative flex h-[40.1px] items-start pl-[2px]">
          <div className="pt-[9px]"><Plus /></div>
          <div className="mt-[17px] h-[3px] w-2 bg-white" />
          <div>{i === 8 ? <ConstraintIcon /> : <DocIcon />}</div>
          <div className="ml-[4px] flex pt-[4px]"><Label tight={i === 0 || i === 8}>{p}</Label></div>
        </div>
      ))}
      <div className="relative flex h-10 items-start pl-[2px]">
        <div className="pt-[9px]"><Plus /></div>
        <div className="mt-[17px] h-[3px] w-[6px] bg-white" />
        <div className="flex pt-[4px]"><Label tight>Applications</Label></div>
      </div>
    </div>
  );
}

/* ---------- chrome ---------- */

const menus = [
  { t: "File", c: "w-[52px]" }, { t: "Edit", c: "w-[56px]" }, { t: "View", c: "w-[60px]" }, { t: "Insert", c: "w-[67px]" },
  { t: "Tools", c: "w-[67px]" }, { t: "Analyze", c: "w-[81px]" }, { t: "Window", c: "w-[85px]" }, { t: "Help", c: "w-[60px]" },
];

const VSlot = ({ mt, arrow, lit, children }: Kids & { mt: string; arrow?: boolean; lit?: boolean }) => (
  <div className={`relative ml-[11px] h-[26px] w-[26px] shrink-0 ${mt}`}>{children}{arrow && <Arrow lit={lit} />}</div>
);
const HGrip = ({ mt }: { mt: string }) => <div className={`ml-[6px] h-[4px] w-[20px] shrink-0 border-t-2 border-b border-t-white border-b-[#9c9cac] ${mt}`} />;

export default function App() {
  return (
    <div className="flex h-[1080px] w-[1920px] overflow-hidden bg-[#cfcfe5] font-['Open_Sans',sans-serif] text-[#1a1a22]">
      <div className="flex w-[1918px] flex-col">
        {/* title bar */}
        <div className="flex h-[29px] shrink-0 items-center bg-white pl-[3px] text-black">
          <AppIcon w={18} h={17} />
          <span className="ml-[6px] w-[500px] text-[14.500px] leading-none tracking-[-0.12px] whitespace-pre">CATIA V5 - [Product1_THIS_IS_ASSEMBLY.CATProduct]</span>
          <svg className="ml-auto block" width="160" height="29" viewBox="1758 0 160 29" fill="none" stroke="#000" strokeWidth="1.200">
            <path d="M1765 14h12M1823.500 11.500h9v9h-9zM1826 11V8.500h9v9h-2.500M1882.500 8.500l11 11M1893.500 8.500l-11 11" />
          </svg>
        </div>

        {/* menu bar */}
        <div className="flex h-6 shrink-0 items-stretch text-[14.500px] leading-[26px] tracking-[-0.3px]">
          <div className="flex w-[27px] items-center bg-[#f4f4fa] pl-px"><AppIcon w={24} h={20} /></div>
          <div className="w-[59px] bg-[#fde4b9] pl-[7px]"><span className="underline underline-offset-2">S</span>tart</div>
          <div className="w-[134px] pl-[9px] tracking-[0.05px]">ENOVIA V5 VPM</div>
          {menus.map((m) => (
            <div key={m.t} className={`shrink-0 ${m.c}`}><span className="underline underline-offset-2">{m.t[0]}</span>{m.t.slice(1)}</div>
          ))}
          <div className="ml-auto flex items-center gap-[3px] bg-[#ececf4] px-px">
            {["M5 14h7", "M4.500 9.500h7v5h-7zM7 9V5.500h7v5h-2", "M7 6l7 7M14 6l-7 7"].map((d) => (
              <svg key={d} width="20" height="20" viewBox="0 0 20 20" className="block bg-white" fill="none" stroke="#7f8b9b" strokeWidth="2.200"><path d={d} /></svg>
            ))}
          </div>
        </div>

        {/* upper toolbar */}
        <div className="flex h-[48px] shrink-0 items-center border-b-2 border-[#5c5c64] bg-[linear-gradient(#ffffff_0px,#e0e0ef_5px,#cfcfe5_11px,#cfcfe5_32px,#a0a0b4_44px)] pt-[2px]">
          <Grip gap="ml-[1415px]" />
          <Slot gap="ml-[13px]" arrow><IcRotate /></Slot>
          <Slot gap="ml-[10px]"><IcShirt /></Slot>
          <Sep gap="ml-[7px]" />
          <Slot gap="ml-[10px]" arrow><IcTurn /></Slot>
          <Slot gap="ml-[11px]"><IcAnchor /></Slot>
          <Slot gap="ml-[9px]"><IcGearsWand /></Slot>
          <Slot gap="ml-[9px]"><IcCam /></Slot>
          <Sep gap="ml-[7px]" />
          <Slot gap="ml-[9px]"><IcGearCursor /></Slot>
        </div>

        {/* workspace */}
        <div className="flex h-[896px] shrink-0">
          <div className="relative flex w-[1873px] shrink-0 border-l-3 border-[#85858a] bg-[linear-gradient(#333363_0%,#3c3c6b_35%,#464674_61%,#525281_66%,#8686a4_87%,#acacc2_100%)]">
            <Scene />
            <Tree />
          </div>
          <div className="flex w-[45px] flex-col bg-[linear-gradient(90deg,#ffffff_0px,#f4f4fa_4px,#cfcfe5_11px,#cfcfe5_36px,#a6a6ba_45px)]">
            <HGrip mt="mt-[5px]" />
            <div className="mt-[11px] ml-[11px] h-[30px] w-[30px]"><IcOrbit /></div>
            <HGrip mt="mt-[14px]" />
            <VSlot mt="mt-[16px]" arrow><IcSelect /></VSlot>
            <HGrip mt="mt-[14px]" />
            <VSlot mt="mt-[10px]" arrow><IcGearCursor grey /></VSlot>
            <HGrip mt="mt-[20px]" />
            <VSlot mt="mt-[12px]" arrow><IcGears2 /></VSlot>
            <VSlot mt="mt-[11px]" arrow><IcFilm /></VSlot>
            <VSlot mt="mt-[11px]" arrow lit><IcBoxBall /></VSlot>
            <VSlot mt="mt-[9px]"><IcMeasure /></VSlot>
            <VSlot mt="mt-[11px]"><IcMagnify /></VSlot>
            <HGrip mt="mt-[14px]" />
            <VSlot mt="mt-[11px]"><IcClash /></VSlot>
            <VSlot mt="mt-[9px]"><IcCubes /></VSlot>
            <HGrip mt="mt-[14px]" />
            <VSlot mt="mt-[13px]"><IcSwirl /></VSlot>
            <VSlot mt="mt-[9px]"><IcTreeGear /></VSlot>
            <VSlot mt="mt-[9px]"><IcHome /></VSlot>
          </div>
        </div>

        {/* lower toolbar */}
        <div className="flex h-[54px] shrink-0 items-center border-b-2 border-[#74747e] bg-[linear-gradient(#ffffff_0px,#e0e0ef_8px,#cfcfe5_16px,#cfcfe5_38px,#a4a4b8_52px)]">
          <Grip gap="ml-[5px]" />
          <Slot gap="ml-[12px]"><IcNew /></Slot>
          <Slot gap="ml-[9px]"><IcOpen /></Slot>
          <Slot gap="ml-[9px]"><IcSave /></Slot>
          <Slot gap="ml-[9px]"><IcPrint /></Slot>
          <Slot gap="ml-[8px]"><IcCut /></Slot>
          <Slot gap="ml-[10px]"><IcCopy /></Slot>
          <Slot gap="ml-[8px]"><IcPaste /></Slot>
          <Slot gap="ml-[9px]" arrow><IcUndo /></Slot>
          <Slot gap="ml-[12px]" arrow><IcRedo /></Slot>
          <Slot gap="ml-[12px]"><IcHelp /></Slot>
          <Grip gap="ml-[16px]" />
          <Slot gap="ml-[12px]"><IcFx /></Slot>
          <Slot gap="ml-[9px]"><IcBubble /></Slot>
          <Slot gap="ml-[6px]"><IcChain /></Slot>
          <Slot gap="ml-[5px]" arrow><IcTable /></Slot>
          <Slot gap="ml-[11px]"><IcRelate /></Slot>
          <Slot gap="ml-[9px]" arrow><IcLock /></Slot>
          <Slot gap="ml-[11px]"><IcEquiv /></Slot>
          <Grip gap="ml-[18px]" />
          <Slot gap="ml-[12px]"><IcPlane /></Slot>
          <Slot gap="ml-[8px]"><IcFit /></Slot>
          <Slot gap="ml-[9px]"><IcPan /></Slot>
          <Slot gap="ml-[10px]"><IcHand /></Slot>
          <Slot gap="ml-[8px]"><IcZoom plus /></Slot>
          <Slot gap="ml-[9px]"><IcZoom /></Slot>
          <Slot gap="ml-[10px]"><IcNormal /></Slot>
          <Slot gap="ml-[8px]"><IcMulti /></Slot>
          <Slot gap="ml-[9px]" arrow><IcCube /></Slot>
          <Slot gap="ml-[12px]" arrow lit><IcCyl /></Slot>
          <Slot gap="ml-[11px]"><IcHide swap /></Slot>
          <Slot gap="ml-[9px]"><IcHide /></Slot>
          <Grip gap="ml-[18px]" />
          <Slot gap="ml-[11px]"><IcG1 /></Slot>
          <Slot gap="ml-[11px]"><IcG2 /></Slot>
          <Slot gap="ml-[7px]"><IcG3 /></Slot>
          <Slot gap="ml-[9px]"><IcG4 /></Slot>
          <Grip gap="ml-[17px]" />
          <Slot gap="ml-[12px]"><IcCamera /></Slot>
          <Grip gap="ml-[24px]" />
          <div className="ml-[13px] pt-[6px]"><DSLogo name="ENOVIA" w={64} /></div>
          <Slot gap="ml-[14px]"><IcSearch /></Slot>
          <div className="mt-[8px] ml-[7px] h-[15px] w-[15px] border-2 border-[#77777f] bg-[#f0dfd4]" />
          <span className="mt-[8px] ml-[6px] w-[110px] shrink-0 text-[15px] leading-none tracking-[-0.45px] whitespace-pre text-[#9c9ca4] [text-shadow:1px_1px_0_#fff]">ENOVIA Search...</span>
          <Slot gap="ml-[13px]"><IcG5 /></Slot>
          <Slot gap="ml-[11px]"><IcG6 /></Slot>
          <Sep gap="ml-[6px]" />
          <Slot gap="ml-[11px]"><IcG7 /></Slot>
          <Sep gap="ml-[5px]" />
          <Slot gap="ml-[9px]"><IcG8 /></Slot>
          <Grip gap="ml-[20px]" />
          <Slot gap="ml-[11px]"><IcTarget /></Slot>
          <span className="mt-[-33px] ml-[28px] w-[13px] text-[18px] leading-none text-[#a0a0a8]">»</span>
          <div className="mt-[-11px] ml-[7px]"><DSLogo name="CATIA" w={52} /></div>
        </div>

        {/* status bar */}
        <div className="flex h-[29px] items-center pl-[4px]">
          <span className="w-[500px] pt-px text-[14.500px] leading-none tracking-[-0.12px]">Select an object or a command</span>
          <div className="mr-[1px] ml-auto h-[25px] w-[375px] border-2 border-[#8c8c94] bg-white" />
          <div className="flex h-[26px] w-[41px] items-center justify-center border-t border-r-2 border-b-2 border-l border-t-white border-r-[#8c8c98] border-b-[#8c8c98] border-l-white">
            <svg width="20" height="18" viewBox="0 0 20 18" fill="none" stroke="#9c9ca4" strokeWidth="1.800"><path d="M2 2h9v8H2zM14 10v2M18 1v14H1" /></svg>
          </div>
          <div className="ml-[2px] flex h-[26px] w-[39px] items-center justify-center border-t border-b-2 border-l border-t-white border-b-[#8c8c98] border-l-white">
            <svg width="20" height="18" viewBox="0 0 20 18" fill="none" stroke="#9c9ca4" strokeWidth="1.800"><circle cx="9" cy="8" r="6.500" /><path d="M9 4v1M7 7h2v5M7 12h5M18 1v15H1" /></svg>
          </div>
        </div>
      </div>
      <div className="w-[2px] bg-[#22222c]" />
    </div>
  );
}
